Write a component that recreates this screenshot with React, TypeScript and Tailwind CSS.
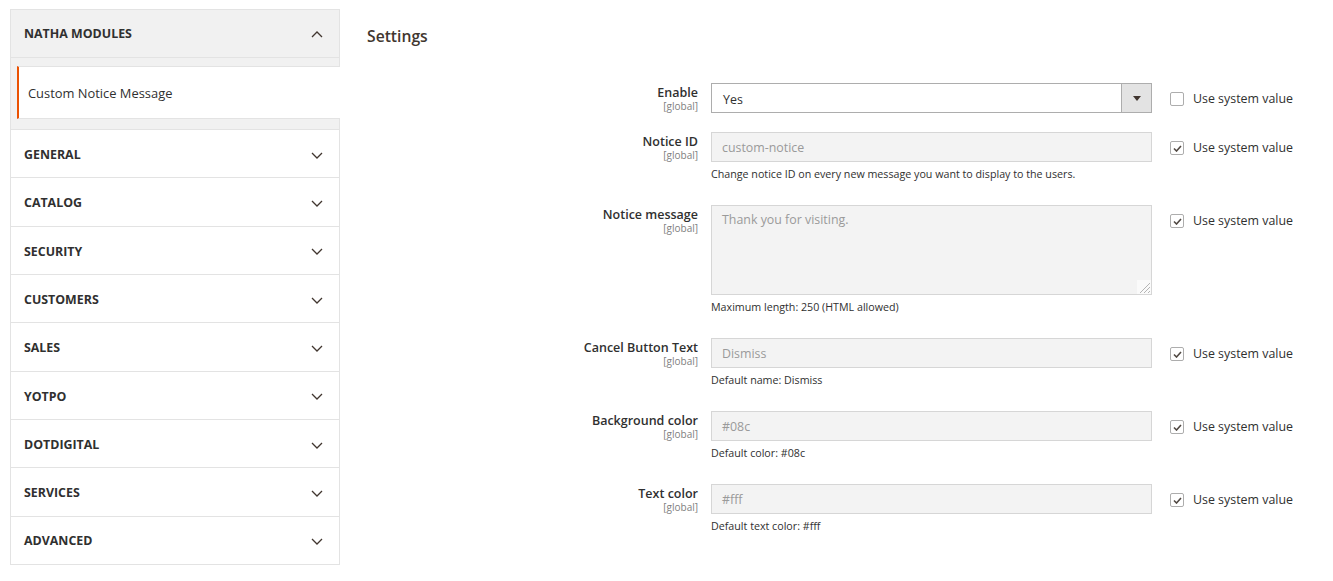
import React from "react";

const sections = ["GENERAL", "CATALOG", "SECURITY", "CUSTOMERS", "SALES", "YOTPO", "DOTDIGITAL", "SERVICES", "ADVANCED"];

function Chevron({ up = false }: { up?: boolean }) {
    return (
        <svg width="12" height="7" viewBox="0 0 12 7" className="block">
            <polyline
                points={up ? "1,6 6,1 11,6" : "1,1 6,6 11,1"}
                fill="none"
                stroke="#41362f"
                strokeWidth="1.3"
            />
        </svg>
    );
}

function SystemValue({ checked }: { checked: boolean }) {
    return (
        <div className="ml-[18px] pt-[9px] flex items-center h-[23px]">
            <span className="w-[14px] h-[14px] border border-[#adadad] rounded-[2px] bg-white flex items-end justify-start pl-[2px] pb-[2px]">
                {checked && (
                    <svg width="9" height="7" viewBox="0 0 9 7">
                        <polyline points="1,3.5 3.5,6 8,1" fill="none" stroke="#514943" strokeWidth="1.6" />
                    </svg>
                )}
            </span>
            <span className="ml-[9px] text-[12.4px] leading-[14px] text-[#303030]">Use system value</span>
        </div>
    );
}

function Label({ text }: { text: string }) {
    return (
        <div className="w-[331px] text-right pt-[2px] flex-none">
            <div className="text-[12.5px] leading-[15px] font-semibold text-[#303030]">{text}</div>
            <div className="mt-[1px] text-[10px] leading-[10px] text-[#808080]">[global]</div>
        </div>
    );
}

function Row({
    label,
    note,
    children,
    checked = true,
}: {
    label: string;
    note?: string;
    children: React.ReactNode;
    checked?: boolean;
}) {
    return (
        <div className={`flex ${note ? "pb-[24px]" : "pb-[19px]"}`}>
            <Label text={label} />
            <div className="ml-[13px] w-[441px] flex-none">
                {children}
                {note && <div className="mt-[5px] text-[10.7px] leading-[14px] text-[#303030]">{note}</div>}
            </div>
            <SystemValue checked={checked} />
        </div>
    );
}

function DisabledInput({ value }: { value: string }) {
    return (
        <div className="h-[30px] border border-[#d6d6d6] bg-[#f3f3f3] px-[10px] pt-[2px] flex items-center text-[12.4px] leading-[16px] text-[#9a9a9a]">
            {value}
        </div>
    );
}

export default function App() {
    return (
        <div className="flex bg-white min-h-[581px]" style={{ fontFamily: '"Open Sans", sans-serif' }}>
            <aside className="ml-[10px] mt-[9px] w-[330px] flex-none self-start border border-[#e3e3e3]">
                <div className="h-[48px] bg-[#f1f1f1] border-b border-[#e3e3e3] pl-[13px] pr-[16px] pt-[2px] flex items-center justify-between">
                    <span className="text-[12.4px] font-bold text-[#303030]">NATHA MODULES</span>
                    <Chevron up />
                </div>
                <div className="bg-[#f1f1f1] pt-[8px] pb-[10px]">
                    <div className="ml-[6px] -mr-[1px] h-[53px] bg-white border-y border-[#e3e3e3] border-l-[2px] border-l-[#eb5202] pl-[9px] pt-[2px] flex items-center">
                        <span className="text-[12.9px] text-[#303030]">Custom Notice Message</span>
                    </div>
                </div>
                {sections.map((s) => (
                    <div
                        key={s}
                        className="h-[48.33px] border-t border-[#e3e3e3] pl-[13px] pr-[16px] pt-[3px] flex items-center justify-between">
                        <span className="text-[12.4px] font-bold text-[#303030]">{s}</span>
                        <Chevron />
                    </div>
                ))}
            </aside>

            <main className="ml-[27px] flex-1">
                <h2 className="mt-[26px] text-[15.7px] leading-[20px] font-semibold text-[#41362f]">Settings</h2>
                <div className="mt-[37px] flex flex-col">
                    <Row label="Enable" checked={false}>
                        <div className="h-[30px] border border-[#adadad] bg-white flex">
                            <div className="flex-1 px-[11px] pt-[4px] flex items-center text-[12.4px] leading-[16px] text-[#303030]">
                                Yes
                            </div>
                            <div className="w-[30px] border-l border-[#adadad] bg-[#e3e3e3] flex items-center justify-center">
                                <svg width="8" height="5" viewBox="0 0 8 5">
                                    <polygon points="0,0 8,0 4,5" fill="#41362f" />
                                </svg>
                            </div>
                        </div>
                    </Row>
                    <Row label="Notice ID" note="Change notice ID on every new message you want to display to the users.">
                        <DisabledInput value="custom-notice" />
                    </Row>
                    <Row label="Notice message" note="Maximum length: 250 (HTML allowed)">
                        <div className="relative h-[90px] border border-[#d6d6d6] bg-[#f3f3f3] px-[10px] pt-[5px] text-[12.4px] leading-[18px] text-[#9a9a9a]">
                            Thank you for visiting.
                            <svg width="14" height="14" viewBox="0 0 14 14" className="absolute right-0 bottom-0">
                                <rect width="14" height="14" fill="#fafafa" />
                                <line x1="13" y1="3" x2="3" y2="13" stroke="#b5b5b5" strokeWidth="1" />
                                <line x1="13" y1="7" x2="7" y2="13" stroke="#b5b5b5" strokeWidth="1" />
                                <line x1="13" y1="11" x2="11" y2="13" stroke="#b5b5b5" strokeWidth="1" />
                            </svg>
                        </div>
                    </Row>
                    <Row label="Cancel Button Text" note="Default name: Dismiss">
                        <DisabledInput value="Dismiss" />
                    </Row>
                    <Row label="Background color" note="Default color: #08c">
                        <DisabledInput value="#08c" />
                    </Row>
                    <Row label="Text color" note="Default text color: #fff">
                        <DisabledInput value="#fff" />
                    </Row>
                </div>
            </main>
        </div>
    );
}
